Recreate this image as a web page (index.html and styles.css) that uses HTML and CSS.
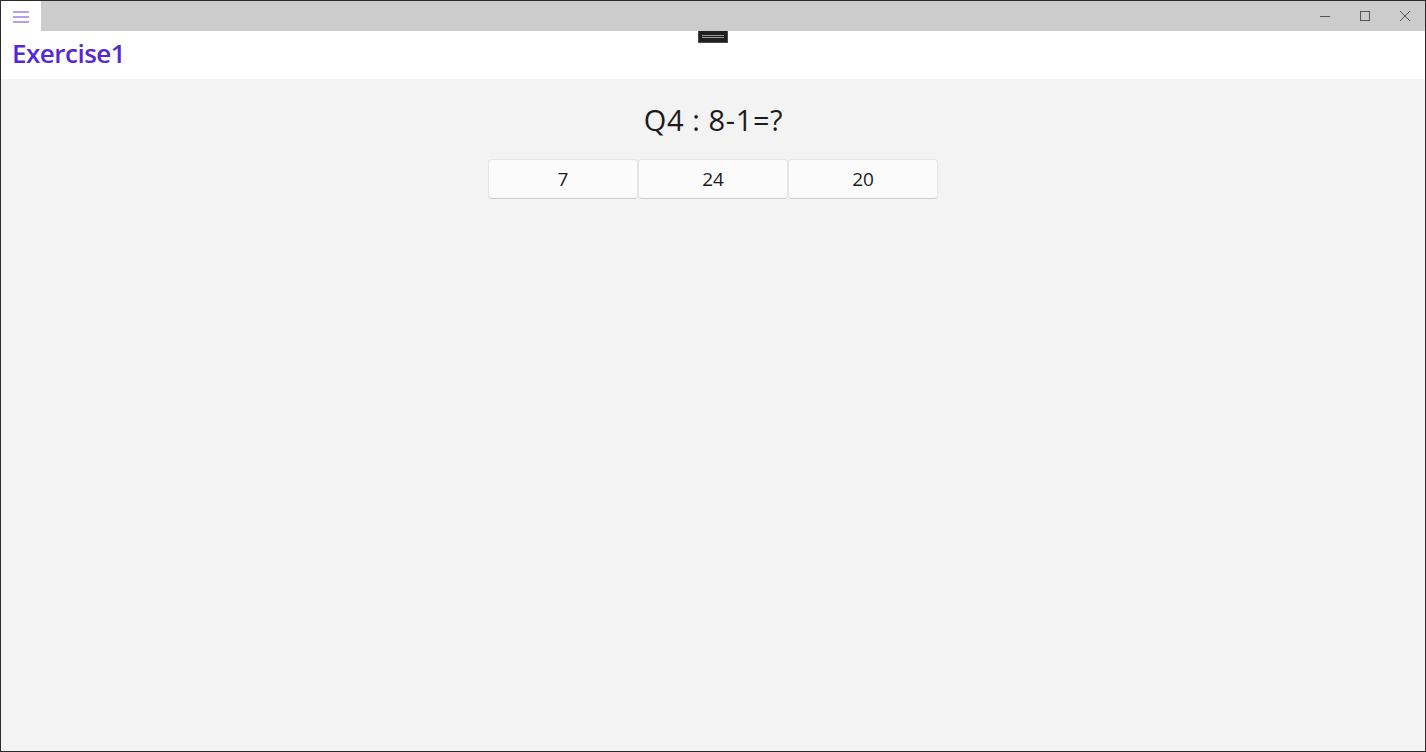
FILE: index.html
```html
<!DOCTYPE html>
<html>
<head>
<meta charset="utf-8">
<link rel="stylesheet" href="styles.css">
</head>
<body>
<div class="window">
  <div class="titlebar">
    <div class="menu-btn">
      <svg width="16" height="12" viewBox="0 0 16 12"><path d="M0 1h16M0 6h16M0 11h16" stroke="#6b43e0" stroke-width="1.2"/></svg>
    </div>
    <div class="drag"></div>
    <div class="caption">
      <div class="cap-btn"><svg width="12" height="12" viewBox="0 0 12 12"><path d="M1 6.5h10" stroke="#555" stroke-width="1"/></svg></div>
      <div class="cap-btn"><svg width="12" height="12" viewBox="0 0 12 12"><rect x="1.5" y="1.5" width="9" height="9" fill="none" stroke="#555" stroke-width="1"/></svg></div>
      <div class="cap-btn"><svg width="12" height="12" viewBox="0 0 12 12"><path d="M1 1l10 10M11 1L1 11" stroke="#555" stroke-width="1"/></svg></div>
    </div>
  </div>
  <div class="header">
    <h1 class="title">Exercise1</h1>
    <div class="handle"><span></span><span></span></div>
  </div>
  <main class="content">
    <div class="question">Q4 : 8-1=?</div>
    <div class="answers">
      <button class="answer">7</button>
      <button class="answer">24</button>
      <button class="answer">20</button>
    </div>
  </main>
</div>
</body>
</html>
```
FILE: styles.css
```css
html, body { margin: 0; padding: 0; }
body {
  width: 1426px;
  height: 752px;
  overflow: hidden;
  font-family: "Open Sans", "Noto Sans", sans-serif;
}
.window {
  box-sizing: border-box;
  width: 1426px;
  height: 752px;
  border: 1px solid #2b2b2b;
  display: flex;
  flex-direction: column;
  background: #f3f3f3;
}
.titlebar {
  height: 30px;
  display: flex;
  background: #cccccc;
  flex-shrink: 0;
}
.menu-btn {
  width: 40px;
  background: #fff;
  display: flex;
  align-items: center;
  justify-content: center;
}
.menu-btn svg { margin-top: 1px; margin-right: 1px; }
.drag { flex: 1; }
.caption { display: flex; }
.cap-btn {
  width: 40px;
  display: flex;
  align-items: center;
  justify-content: center;
}
.header {
  height: 48px;
  background: #fff;
  position: relative;
  flex-shrink: 0;
}
.title {
  margin: 0;
  padding: 3px 0 0 11px;
  font-family: "Open Sans", "Noto Sans", sans-serif;
  font-size: 26px;
  font-weight: 600;
  letter-spacing: -0.5px;
  color: #5628d4;
  line-height: 38px;
}
.handle {
  position: absolute;
  left: 697px;
  top: 0;
  width: 28px;
  height: 11px;
  background: #1f1f1f;
  border: 1px solid #4a4a4a;
  border-top: none;
  display: flex;
  flex-direction: column;
  align-items: center;
  justify-content: center;
  gap: 1px;
}
.handle span { width: 22px; height: 1px; background: #9a9a9a; }
.content {
  flex: 1;
  display: flex;
  flex-direction: column;
  align-items: center;
  padding-top: 22px;
}
.question {
  font-size: 29px;
  letter-spacing: 0.6px;
  color: #1b1b1b;
  line-height: 38px;
  margin-left: 1px;
}
.answers {
  display: flex;
  margin-top: 20px;
}
.answer {
  width: 150px;
  height: 40px;
  box-sizing: border-box;
  background: #fbfbfb;
  border: 1px solid #e5e5e5;
  border-bottom-color: #cccccc;
  border-radius: 4px;
  font-family: "Open Sans", "Noto Sans", sans-serif;
  font-size: 19px;
  color: #1b1b1b;
  padding: 0;
  line-height: 38px;
}
```
